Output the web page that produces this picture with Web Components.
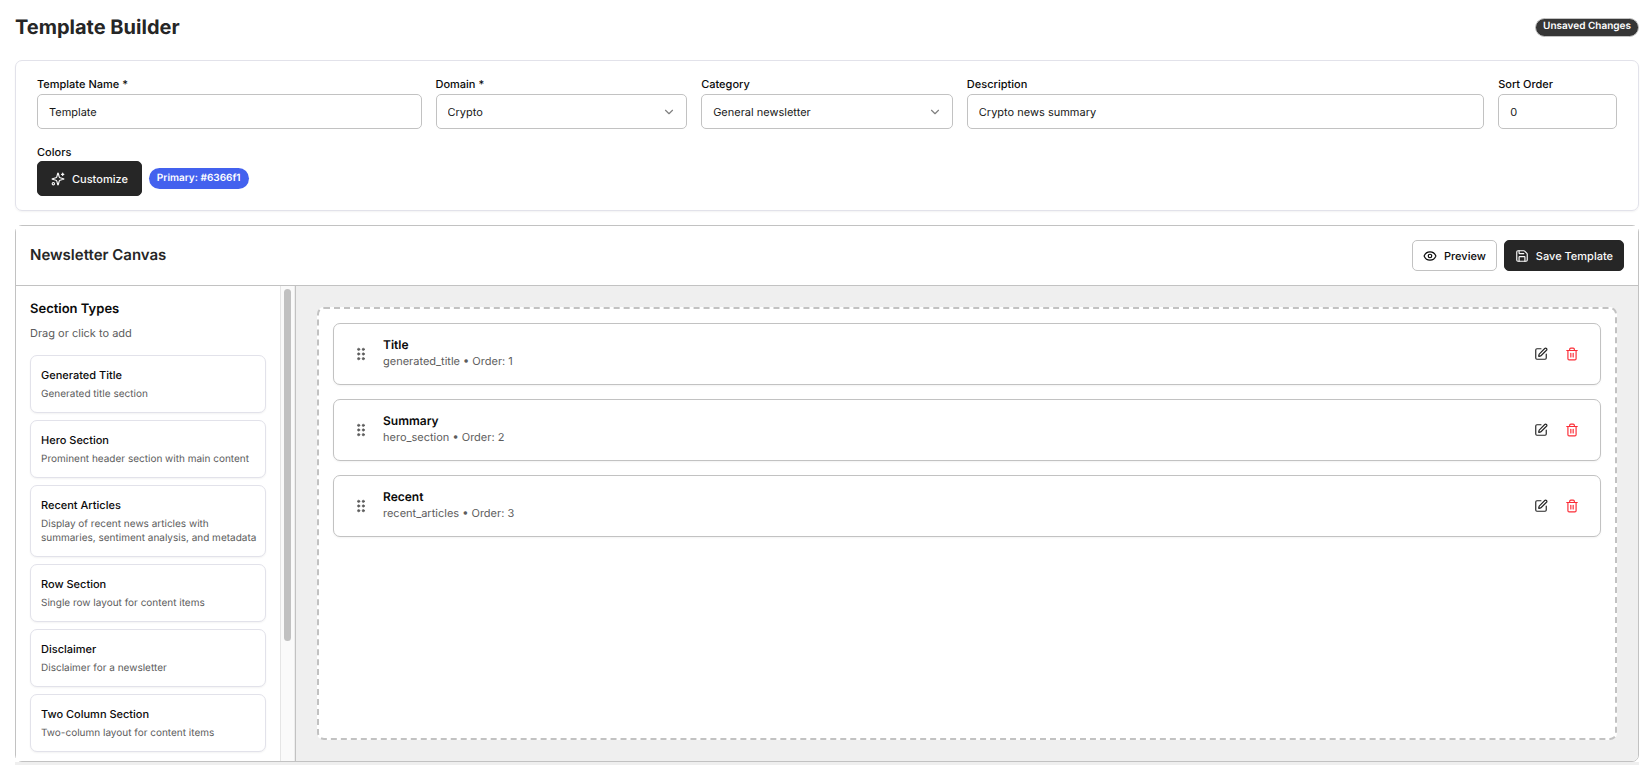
<!DOCTYPE html>
<html lang="en">
<head>
<meta charset="UTF-8">
<meta name="viewport" content="width=device-width, initial-scale=1.0">
<title>Template Builder</title>
<style>
  html, body {
    margin: 0;
    height: 100%;
  }
  body {
    font-family: Inter, "Liberation Sans", sans-serif;
    font-size: 11px;
    line-height: 16px;
    text-rendering: geometricPrecision;
    color: #0a0a0a;
    background: #fff;
    overflow: hidden;
    --border: #c2c2c2;
    --soft: #e2e2ea;
    --dark: #262626;
    --muted: #5c5c5c;
    --canvas: #efefef;
  }
</style>
</head>
<body>
<template-builder></template-builder>

<script>
  const ICONS = {
    eye: '<path d="M2.06 12.35a1 1 0 0 1 0-.7 10.75 10.75 0 0 1 19.88 0 1 1 0 0 1 0 .7 10.75 10.75 0 0 1-19.88 0"/><circle cx="12" cy="12" r="3"/>',
    save: '<path d="M15.2 3a2 2 0 0 1 1.4.6l3.8 3.8a2 2 0 0 1 .6 1.4V19a2 2 0 0 1-2 2H5a2 2 0 0 1-2-2V5a2 2 0 0 1 2-2z"/><path d="M17 21v-7a1 1 0 0 0-1-1H8a1 1 0 0 0-1 1v7"/><path d="M7 3v4a1 1 0 0 0 1 1h7"/>',
    sparkles: '<path d="M9.94 15.5A2 2 0 0 0 8.5 14.06l-6.14-1.58a.5.5 0 0 1 0-.96L8.5 9.94A2 2 0 0 0 9.94 8.5l1.58-6.14a.5.5 0 0 1 .96 0L14.06 8.5A2 2 0 0 0 15.5 9.94l6.14 1.58a.5.5 0 0 1 0 .96L15.5 14.06a2 2 0 0 0-1.44 1.44l-1.58 6.14a.5.5 0 0 1-.96 0z"/><path d="M20 2v4"/><path d="M22 4h-4"/><circle cx="4" cy="20" r="2"/>',
    chevron: '<path d="m6 9 6 6 6-6"/>',
    edit: '<path d="M12 3H5a2 2 0 0 0-2 2v14a2 2 0 0 0 2 2h14a2 2 0 0 0 2-2v-7"/><path d="M18.38 2.62a1 1 0 0 1 3 3l-9.01 9.01a2 2 0 0 1-.85.51l-2.87.84a.5.5 0 0 1-.62-.62l.84-2.87a2 2 0 0 1 .5-.85z"/>',
    trash: '<path d="M3 6h18"/><path d="M19 6v14a2 2 0 0 1-2 2H7a2 2 0 0 1-2-2V6"/><path d="M8 6V4a2 2 0 0 1 2-2h4a2 2 0 0 1 2 2v2"/><path d="M10 11v6"/><path d="M14 11v6"/>',
    grip: '<g fill="currentColor" stroke-width="1"><circle cx="8" cy="4" r="2"/><circle cx="16" cy="4" r="2"/><circle cx="8" cy="12" r="2"/><circle cx="16" cy="12" r="2"/><circle cx="8" cy="20" r="2"/><circle cx="16" cy="20" r="2"/></g>'
  };

  class TbIcon extends HTMLElement {
    constructor() {
      super();
      this.attachShadow({ mode: 'open' });
    }

    connectedCallback() {
      this.shadowRoot.innerHTML = `
        <style>
          :host { display: block; width: 14px; height: 14px; flex: none; }
          svg { display: block; width: 100%; height: 100%; }
        </style>
        <svg viewBox="0 0 24 24" fill="none" stroke="currentColor" stroke-width="2" stroke-linecap="round" stroke-linejoin="round" aria-hidden="true">${ICONS[this.getAttribute('name')]}</svg>
      `;
    }
  }
  customElements.define('tb-icon', TbIcon);

  class TbButton extends HTMLElement {
    constructor() {
      super();
      this.attachShadow({ mode: 'open' });
    }

    connectedCallback() {
      const icon = this.getAttribute('icon');
      this.shadowRoot.innerHTML = `
        <style>
          :host { display: block; }
          button {
            display: flex;
            align-items: center;
            gap: 7px;
            height: 31px;
            padding: 0 10px;
            border: 1px solid var(--border);
            border-radius: 5px;
            background: #fff;
            color: #0a0a0a;
            font: inherit;
            font-weight: 500;
            text-rendering: inherit;
            white-space: nowrap;
            cursor: pointer;
          }
          :host([variant="dark"]) button {
            background: var(--dark);
            border-color: var(--dark);
            color: #fafafa;
          }
          :host([size="lg"]) button { height: 35px; padding: 0 13px; }
        </style>
        <button type="button">${icon ? `<tb-icon name="${icon}"></tb-icon>` : ''}<slot></slot></button>
      `;
    }
  }
  customElements.define('tb-button', TbButton);

  class TbBadge extends HTMLElement {
    constructor() {
      super();
      this.attachShadow({ mode: 'open' });
      this.shadowRoot.innerHTML = `
        <style>
          :host {
            display: block;
            padding: 2px 8px;
            border-radius: 999px;
            background: #4361ee;
            color: #fff;
            font-size: 10px;
            line-height: 17px;
            font-weight: 600;
            white-space: nowrap;
          }
          :host([variant="dark"]) {
            padding: 0 7px 2px;
            border: 1px solid var(--border);
            background: #363636;
            line-height: 15px;
          }
        </style>
        <slot></slot>
      `;
    }
  }
  customElements.define('tb-badge', TbBadge);

  // labelled text box or drop-down
  class TbField extends HTMLElement {
    constructor() {
      super();
      this.attachShadow({ mode: 'open' });
    }

    connectedCallback() {
      const type = this.getAttribute('type') || 'text';
      const value = this.getAttribute('value');
      let control = `<input id="control" type="${type}" value="${value}">`;
      if (type === 'select') {
        control = `<select id="control"><option>${value}</option></select><tb-icon name="chevron"></tb-icon>`;
      }
      this.shadowRoot.innerHTML = `
        <style>
          :host { display: block; min-width: 0; }
          label { display: block; margin-bottom: 2px; font-weight: 500; }
          .box { display: grid; align-items: center; }
          input, select, tb-icon { grid-area: 1 / 1; }
          input, select {
            box-sizing: border-box;
            width: 100%;
            height: 35px;
            margin: 0;
            padding: 0 11px;
            border: 1px solid var(--border);
            border-radius: 5px;
            background: #fff;
            color: #171717;
            font: inherit;
            text-rendering: inherit;
            appearance: none;
          }
          tb-icon {
            justify-self: end;
            margin-right: 11px;
            color: #808080;
            pointer-events: none;
          }
        </style>
        <label for="control">${this.getAttribute('label')}</label>
        <div class="box">${control}</div>
      `;
    }
  }
  customElements.define('tb-field', TbField);

  // draggable entry in the left palette
  class SectionType extends HTMLElement {
    constructor() {
      super();
      this.attachShadow({ mode: 'open' });
      this.shadowRoot.innerHTML = `
        <style>
          :host {
            display: block;
            padding: 11px 6px 11px 10px;
            border: 1px solid var(--soft);
            border-radius: 7px;
            background: #fff;
            box-shadow: 0 1px 2px rgba(0, 0, 0, 0.05);
            cursor: grab;
          }
          .name { line-height: 17px; font-weight: 500; }
          .info { margin-top: 3px; font-size: 10px; line-height: 14px; color: var(--muted); }
        </style>
        <div class="name"><slot name="name"></slot></div>
        <div class="info"><slot></slot></div>
      `;
    }
  }
  customElements.define('section-type', SectionType);

  class CanvasSection extends HTMLElement {
    constructor() {
      super();
      this.attachShadow({ mode: 'open' });
      this.shadowRoot.innerHTML = `
        <style>
          :host {
            display: flex;
            align-items: center;
            padding: 13px 13px 13px 20px;
            border: 1px solid var(--border);
            border-radius: 7px;
            background: #fff;
            box-shadow: 0 1px 2px rgba(0, 0, 0, 0.05);
          }
          .grip { color: var(--muted); cursor: grab; }
          .text { flex: 1; margin-left: 15px; padding-bottom: 2px; }
          .name { font-size: 12px; font-weight: 600; }
          .meta { color: var(--muted); }
          .tools { display: flex; gap: 1px; }
          button {
            display: flex;
            margin: 0;
            padding: 8px;
            border: 0;
            background: none;
            color: #262626;
            cursor: pointer;
          }
          .delete { color: #fb2c36; }
        </style>
        <tb-icon class="grip" name="grip"></tb-icon>
        <div class="text">
          <div class="name"><slot name="name"></slot></div>
          <div class="meta"><slot></slot></div>
        </div>
        <div class="tools">
          <button type="button" aria-label="Edit section"><tb-icon name="edit"></tb-icon></button>
          <button type="button" class="delete" aria-label="Delete section"><tb-icon name="trash"></tb-icon></button>
        </div>
      `;
    }
  }
  customElements.define('canvas-section', CanvasSection);

  class TemplateSettings extends HTMLElement {
    constructor() {
      super();
      this.attachShadow({ mode: 'open' });
      this.shadowRoot.innerHTML = `
        <style>
          :host {
            display: grid;
            grid-template-columns: repeat(12, minmax(0, 1fr));
            gap: 15px 14px;
            padding: 15px 21px 14px;
            border: 1px solid var(--soft);
            border-radius: 7px;
            box-shadow: 0 1px 2px rgba(0, 0, 0, 0.05);
          }
          .span-2 { grid-column: span 2; }
          .span-3 { grid-column: span 3; }
          .span-4 { grid-column: span 4; }
          .colors-label { display: block; margin-bottom: 1px; font-weight: 500; }
          .colors { display: flex; align-items: center; gap: 7px; }
        </style>
        <tb-field class="span-3" label="Template Name *" value="Template"></tb-field>
        <tb-field class="span-2" type="select" label="Domain *" value="Crypto"></tb-field>
        <tb-field class="span-2" type="select" label="Category" value="General newsletter"></tb-field>
        <tb-field class="span-4" label="Description" value="Crypto news summary"></tb-field>
        <tb-field label="Sort Order" value="0"></tb-field>
        <div class="span-3">
          <span class="colors-label">Colors</span>
          <div class="colors">
            <tb-button variant="dark" size="lg" icon="sparkles">Customize</tb-button>
            <tb-badge>Primary: #6366f1</tb-badge>
          </div>
        </div>
      `;
    }
  }
  customElements.define('template-settings', TemplateSettings);

  class SectionPalette extends HTMLElement {
    constructor() {
      super();
      this.attachShadow({ mode: 'open' });
      this.shadowRoot.innerHTML = `
        <style>
          :host {
            display: flex;
            width: 279px;
            flex: none;
            border-right: 1px solid var(--border);
            overflow: hidden;
          }
          .list { flex: 1; min-width: 0; padding: 14px; overflow: hidden; background: #fff; }
          h3 { margin: 0; font-size: 13px; line-height: 18px; font-weight: 600; }
          p { margin: 7px 0 14px; color: var(--muted); }
          .items { display: flex; flex-direction: column; gap: 7px; }
          .track {
            box-sizing: border-box;
            width: 15px;
            padding: 3px;
            border-left: 1px solid #e5e5e5;
            border-right: 1px solid #ededed;
            background: #fafafa;
          }
          .thumb { height: 75%; border-radius: 4px; background: #c1c1c1; }
        </style>
        <div class="list">
          <h3>Section Types</h3>
          <p>Drag or click to add</p>
          <div class="items"><slot></slot></div>
        </div>
        <div class="track"><div class="thumb"></div></div>
      `;
    }
  }
  customElements.define('section-palette', SectionPalette);

  class NewsletterCanvas extends HTMLElement {
    constructor() {
      super();
      this.attachShadow({ mode: 'open' });
      this.shadowRoot.innerHTML = `
        <style>
          :host {
            display: flex;
            flex-direction: column;
            min-height: 0;
            border: 1px solid var(--border);
            border-radius: 7px;
          }
          header {
            display: flex;
            align-items: flex-start;
            justify-content: space-between;
            padding: 14px;
            border-bottom: 1px solid var(--border);
            background: #fff;
          }
          h2 { margin: 0; font-size: 15px; line-height: 30px; font-weight: 600; color: #262626; }
          .actions { display: flex; gap: 7px; }
          .body { display: flex; flex: 1; min-height: 0; }
          .stage {
            display: flex;
            flex: 1;
            padding: 21px;
            background: var(--canvas);
            border-bottom-right-radius: 6px;
          }
          .drop {
            display: flex;
            flex: 1;
            flex-direction: column;
            gap: 14px;
            padding: 14px;
            border: 2px dashed var(--border);
            border-radius: 7px;
            background: #fff;
          }
        </style>
        <header>
          <h2>Newsletter Canvas</h2>
          <div class="actions">
            <tb-button icon="eye">Preview</tb-button>
            <tb-button variant="dark" icon="save">Save Template</tb-button>
          </div>
        </header>
        <div class="body">
          <slot name="palette"></slot>
          <div class="stage"><div class="drop"><slot></slot></div></div>
        </div>
      `;
    }
  }
  customElements.define('newsletter-canvas', NewsletterCanvas);

  class TemplateBuilder extends HTMLElement {
    constructor() {
      super();
      this.attachShadow({ mode: 'open' });
      this.shadowRoot.innerHTML = `
        <style>
          :host {
            display: flex;
            flex-direction: column;
            gap: 14px;
            box-sizing: border-box;
            height: 100vh;
            padding: 13px 12px 3px 15px;
            background: linear-gradient(var(--canvas), var(--canvas)) 15px 100% / calc(100% - 27px) 3px no-repeat;
          }
          .top {
            display: flex;
            align-items: center;
            justify-content: space-between;
            height: 28px;
            margin-bottom: 5px;
          }
          h1 { margin: 0; font-size: 20px; line-height: 28px; font-weight: 700; color: #262626; }
          newsletter-canvas { flex: 1; }
        </style>
        <div class="top">
          <h1>Template Builder</h1>
          <tb-badge variant="dark">Unsaved Changes</tb-badge>
        </div>
        <template-settings></template-settings>
        <newsletter-canvas>
          <section-palette slot="palette">
            <section-type><span slot="name">Generated Title</span>Generated title section</section-type>
            <section-type><span slot="name">Hero Section</span>Prominent header section with main content</section-type>
            <section-type><span slot="name">Recent Articles</span>Display of recent news articles with summaries, sentiment analysis, and metadata</section-type>
            <section-type><span slot="name">Row Section</span>Single row layout for content items</section-type>
            <section-type><span slot="name">Disclaimer</span>Disclaimer for a newsletter</section-type>
            <section-type><span slot="name">Two Column Section</span>Two-column layout for content items</section-type>
          </section-palette>
          <canvas-section><span slot="name">Title</span>generated_title • Order: 1</canvas-section>
          <canvas-section><span slot="name">Summary</span>hero_section • Order: 2</canvas-section>
          <canvas-section><span slot="name">Recent</span>recent_articles • Order: 3</canvas-section>
        </newsletter-canvas>
      `;
    }
  }
  customElements.define('template-builder', TemplateBuilder);
</script>
</body>
</html>
